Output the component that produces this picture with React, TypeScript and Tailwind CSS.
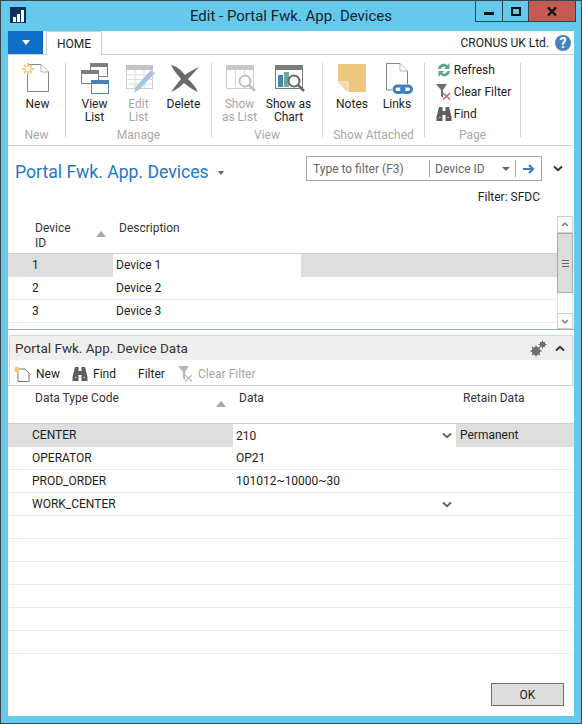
import React from "react";

const Chevron = ({ up = false, cls = "" }: { up?: boolean; cls?: string }) => (
  <svg width="10" height="7" viewBox="0 0 10 7" className={cls}>
    <path d={up ? "M1 5.5 L5 1.8 L9 5.5" : "M1 1.5 L5 5.2 L9 1.5"} fill="none" stroke="currentColor" strokeWidth="2" />
  </svg>
);
const SortUp = () => (
  <svg width="10" height="6" viewBox="0 0 10 6"><path d="M5 0 L10 6 L0 6 Z" fill="#a9a9a9" /></svg>
);

const IconNew = () => (
  <svg width="32" height="32" viewBox="0 0 32 32">
    <path d="M5.5 1.5 H19 L26.5 9 V28.5 H5.5 Z" fill="#fff" stroke="#858585" />
    <path d="M19 1.5 V9 H26.5" fill="#fff" stroke="#b5b5b5" />
    <g stroke="#f1c878" strokeWidth="2">
      <path d="M6 0 V12 M0 6 H12 M2 2 L10 10 M10 2 L2 10" />
    </g>
    <circle cx="6" cy="6" r="2.5" fill="#fff" />
  </svg>
);
const IconViewList = () => (
  <svg width="32" height="32" viewBox="0 1 32 32">
    <rect x="11.5" y="1.5" width="17" height="13" fill="#fff" stroke="#7f7f7f" />
    <rect x="11" y="1" width="18" height="4" fill="#7f7f7f" />
    <rect x="2.5" y="8.5" width="17" height="13" fill="#fff" stroke="#7f7f7f" />
    <rect x="2" y="8" width="18" height="4" fill="#7f7f7f" />
    <rect x="12.5" y="18.5" width="17" height="13" fill="#fff" stroke="#4b80b8" />
    <rect x="12" y="18" width="18" height="4" fill="#4b80b8" />
  </svg>
);
const IconEditList = () => (
  <svg width="32" height="32" viewBox="0 0 32 32">
    <rect x="3.5" y="2.5" width="26" height="23" fill="#fff" stroke="#cfcfcf" />
    <rect x="3" y="2" width="27" height="5" fill="#c4c4c4" />
    <path d="M3 12 H30 M3 16.5 H30 M3 21 H30 M12 7 V26 M21 7 V26" stroke="#dcdcdc" />
    <path d="M28 7 L32 10 L16 27 L11 29.5 L12.5 24 Z" fill="#a9c5e3" />
  </svg>
);
const IconDelete = () => (
  <svg width="32" height="32" viewBox="0 0 32 32">
    <path d="M3 2 C9 3 14 8 17 12 C21 9 26 6 31 4 C27 8 23 13 20 16 C24 20 28 24 30 29 C25 27 20 23 16 20 C12 24 8 27 3 29 C5 26 9 21 13 16 C9 11 5 7 3 2 Z" fill="#6a6a6a" />
  </svg>
);
const IconShowList = () => (
  <svg width="32" height="32" viewBox="-1 0 32 32">
    <rect x="1.5" y="2.5" width="27" height="23" fill="#fff" stroke="#cdcdcd" />
    <rect x="1" y="2" width="28" height="5" fill="#c8c8c8" />
    <path d="M10.5 7 V26 M19.5 7 V26" stroke="#d5d5d5" />
    <circle cx="20" cy="18" r="5.5" fill="#fff" stroke="#c0c0c0" strokeWidth="2" />
    <path d="M24 22 L30 28" stroke="#c0c0c0" strokeWidth="2.5" />
  </svg>
);
const IconChart = () => (
  <svg width="32" height="32" viewBox="-1 0 32 32">
    <rect x="1.5" y="2.5" width="27" height="23" fill="#fff" stroke="#7c7c7c" />
    <rect x="1" y="2" width="28" height="5" fill="#7c7c7c" />
    <rect x="4" y="12" width="5" height="12" fill="#4b80b8" />
    <rect x="10" y="9" width="5" height="15" fill="#6fa99a" />
    <circle cx="20" cy="18" r="5.5" fill="#fff" stroke="#6a6a6a" strokeWidth="2" />
    <path d="M24 22 L30 28" stroke="#6a6a6a" strokeWidth="2.5" />
  </svg>
);
const IconNotes = () => (
  <svg width="32" height="32" viewBox="0 0 32 32">
    <path d="M2 1 H30 V29 H12 L2 19 Z" fill="#eec77f" />
    <path d="M12 29 V19 H2" fill="none" stroke="#fff" strokeWidth="1" />
    <path d="M2.5 19.5 H11.5 V28.5 Z" fill="#f4d8a6" />
  </svg>
);
const IconLinks = () => (
  <svg width="32" height="32" viewBox="0 1 32 32">
    <path d="M5.5 1.5 H19 L26.5 9 V28 H5.5 Z" fill="#fff" stroke="#858585" />
    <path d="M19 1.5 V9 H26.5" fill="#fff" stroke="#b5b5b5" />
    <rect x="11" y="22" width="21" height="10" rx="4.5" fill="#fff" />
    <g fill="none" stroke="#3f80bd" strokeWidth="3">
      <rect x="13" y="24" width="10" height="6.5" rx="3.2" />
      <rect x="20.5" y="24" width="10" height="6.5" rx="3.2" />
    </g>
  </svg>
);
const IconRefresh = () => (
  <svg width="16" height="16" viewBox="0 0 16 16">
    <path d="M2 7 C2.5 3 6 1 9.5 2 L11.5 3.2 L13.5 1 V7 H8 L10 5 C8 3.8 5.5 4.5 4.8 7 Z" fill="#5fa589" />
    <path d="M14 9 C13.5 13 10 15 6.5 14 L4.5 12.8 L2.5 15 V9 H8 L6 11 C8 12.2 10.5 11.5 11.2 9 Z" fill="#5fa589" />
  </svg>
);
const IconClear = ({ c = "#6f6f6f", x = "#d9584b" }: { c?: string; x?: string }) => (
  <svg width="16" height="16" viewBox="0 0 16 16">
    <path d="M0 0 H11 L7 6 V14 L5 12 V6 Z" fill={c} />
    <path d="M7 9 L14 15.5 M14 9 L7 15.5" stroke={x} strokeWidth="1.4" />
  </svg>
);
const IconFind = () => (
  <svg width="16" height="16" viewBox="0 0 16 16">
    <path d="M3 1 H6.5 V5 H9.5 V1 H13 L15.5 11 V15 H9.5 V9 H6.5 V15 H0.5 V11 Z" fill="#5d5d5d" />
    <path d="M3 11.5 H4.5 M11.5 11.5 H13" stroke="#cfcfcf" />
  </svg>
);
const IconGears = () => (
  <svg width="17" height="17" viewBox="0 0 17 17" fill="none" stroke="#6f6f6f">
    <circle cx="6" cy="11" r="3" strokeWidth="2.4" />
    <path d="M6 5.5 V16.5 M0.5 11 H11.5 M2 7 L10 15 M10 7 L2 15" strokeWidth="1.3" />
    <circle cx="12.5" cy="4.5" r="2" strokeWidth="1.6" />
    <path d="M12.5 0.5 V8.5 M8.5 4.5 H16.5 M9.8 1.8 L15.2 7.2 M15.2 1.8 L9.8 7.2" strokeWidth="1" />
  </svg>
);

const BigBtn = ({ icon, lines, w, off = false }: { icon: React.ReactNode; lines: string[]; w: string; off?: boolean }) => (
  <div className={`flex flex-col items-center shrink-0 ${w} ${off ? "text-[#a6a6a6]" : "text-[#1d1d1d]"}`}>
    <div className="h-[32px] w-[32px] shrink-0">{icon}</div>
    <div className="mt-[3px] text-center leading-[13px] whitespace-nowrap">
      {lines.map((l) => (
        <div key={l}>{l}</div>
      ))}
    </div>
  </div>
);

const Group = ({ label, w, inner = "", children }: { label: string; w: string; inner?: string; children: React.ReactNode }) => (
  <div className={`${w} shrink-0 flex flex-col h-[74px] border-r border-[#d4d4d4]`}>
    <div className={`flex-1 flex justify-center ${inner}`}>{children}</div>
    <div className="text-center text-[#a9a9a9] leading-[14px] mb-[-5px]">{label}</div>
  </div>
);

const SmallBtn = ({ icon, text }: { icon: React.ReactNode; text: string }) => (
  <div className="flex items-center gap-[2px] h-[22px] text-[#1d1d1d] whitespace-nowrap">
    <div className="w-[16px] h-[16px]">{icon}</div>
    <span>{text}</span>
  </div>
);

const Row1 = ({ id, hi = false }: { id: string; hi?: boolean }) => (
  <div className={`grid grid-cols-[105px_188px_1fr] h-[23px] text-[#1d1d1d] leading-[22px] ${hi ? "" : "border-b border-[#ededed]"}`}>
    <div className={`pl-[24px] ${hi ? "bg-[#dedede]" : ""}`}>{id}</div>
    <div className="pl-[3px]">Device {id}</div>
    <div className={hi ? "bg-[#dedede]" : ""} />
  </div>
);

const Row2 = ({ a = "", b = "", c = "", hi = false, chev = false }: { a?: string; b?: string; c?: string; hi?: boolean; chev?: boolean }) => (
  <div className={`grid grid-cols-[225px_223px_1fr] h-[23px] text-[#1d1d1d] leading-[22px] ${hi ? "" : "border-b border-[#ededed]"}`}>
    <div className={`pl-[24px] ${hi ? "bg-[#dedede]" : ""}`}>{a}</div>
    <div className="pl-[3px] flex justify-between items-center pr-[4px]">
      <span>{b}</span>
      {chev && <Chevron cls="text-[#666666]" />}
    </div>
    <div className={`pl-[4px] ${hi ? "bg-[#dedede]" : ""}`}>{c}</div>
  </div>
);

export default function App() {
  return (
    <div
      className="w-[582px] h-[724px] border border-[#37474f] bg-[#65c9eb] flex flex-col text-[12px] overflow-hidden"
      style={{ fontFamily: "Roboto, 'Open Sans', sans-serif" }}
    >
      {/* Title bar */}
      <div className="h-[30px] shrink-0 flex items-start">
        <div className="w-[16px] h-[16px] ml-[9px] mt-[6px] bg-[#10305c] flex items-end justify-center gap-[1px] pb-[1px] shrink-0">
          <div className="w-[3px] h-[5px] bg-white" />
          <div className="w-[3px] h-[8px] bg-white" />
          <div className="w-[3px] h-[12px] bg-white" />
        </div>
        <div className="flex-1 text-center text-[15px] text-[#14262f] leading-[30px] pl-[81px] whitespace-nowrap">Edit - Portal Fwk. App. Devices</div>
        <div className="flex h-[21px] border border-[#2b4050] border-t-0 mr-[5px] shrink-0 w-[101px]">
          <div className="w-[27px] border-r border-[#2b4050] flex items-center justify-center"><div className="w-[10px] h-[3px] bg-[#111] mt-[4px]" /></div>
          <div className="w-[26px] border-r border-[#2b4050] flex items-center justify-center"><div className="w-[10px] h-[9px] border-2 border-[#111]" /></div>
          <div className="flex-1 bg-[#c55a50] flex items-center justify-center">
            <svg width="10" height="9" viewBox="0 0 10 9"><path d="M1 0.5 L9 8.5 M9 0.5 L1 8.5" stroke="#111" strokeWidth="2.4" /></svg>
          </div>
        </div>
      </div>

      {/* Content */}
      <div className="flex-1 mx-[7px] mb-[7px] bg-white flex flex-col min-h-0">
        {/* Tabs */}
        <div className="h-[24px] shrink-0 flex items-end border-b border-[#cfcfcf]">
          <div className="w-[35px] h-[23px] bg-[#0f6fc6] flex items-center justify-center">
            <svg width="8" height="5" viewBox="0 0 8 5"><path d="M0 0 H8 L4 5 Z" fill="#fff" /></svg>
          </div>
          <div className="ml-[3px] w-[56px] h-[24px] -mb-px bg-white border border-b-0 border-[#cfcfcf] flex items-center justify-center text-[#1d1d1d]">HOME</div>
          <div className="flex-1 flex justify-end items-center h-[23px] pr-[3px] gap-[6px] text-[#1d1d1d]">
            <span>CRONUS UK Ltd.</span>
            <div className="w-[16px] h-[16px] rounded-full bg-[#4a82bd] text-white font-bold text-[14px] leading-[16px] text-center">?</div>
          </div>
        </div>

        {/* Ribbon */}
        <div className="h-[91px] shrink-0 border-b border-[#d0d0d0] flex items-start pt-[8px]">
          <Group label="New" w="w-[58px]" inner="pl-[2px]"><BigBtn icon={<IconNew />} lines={["New"]} w="w-[44px]" /></Group>
          <Group label="Manage" w="w-[146px]" inner="pl-[2px]">
            <BigBtn icon={<IconViewList />} lines={["View", "List"]} w="w-[44px]" />
            <BigBtn icon={<IconEditList />} lines={["Edit", "List"]} w="w-[44px]" off />
            <BigBtn icon={<IconDelete />} lines={["Delete"]} w="w-[46px]" />
          </Group>
          <Group label="View" w="w-[111px]" inner="pr-[5px]">
            <BigBtn icon={<IconShowList />} lines={["Show", "as List"]} w="w-[48px]" off />
            <BigBtn icon={<IconChart />} lines={["Show as", "Chart"]} w="w-[50px]" />
          </Group>
          <Group label="Show Attached" w="w-[102px]" inner="pl-[1px]">
            <BigBtn icon={<IconNotes />} lines={["Notes"]} w="w-[46px]" />
            <BigBtn icon={<IconLinks />} lines={["Links"]} w="w-[44px]" />
          </Group>
          <Group label="Page" w="w-[96px]" inner="pl-[2px]">
            <div className="flex flex-col -mt-[4px]">
              <SmallBtn icon={<IconRefresh />} text="Refresh" />
              <SmallBtn icon={<IconClear />} text="Clear Filter" />
              <SmallBtn icon={<IconFind />} text="Find" />
            </div>
          </Group>
        </div>

        {/* Page header */}
        <div className="h-[71px] shrink-0 flex flex-col">
          <div className="flex items-start pt-[10px]">
            <div className="flex items-center ml-[7px] mt-[3px] text-[#2477c4] text-[17.6px] leading-[26px] whitespace-nowrap">
              Portal Fwk. App. Devices
              <svg width="6" height="4" viewBox="0 0 6 4" className="ml-[9px] mt-[1px]"><path d="M0 0 H6 L3 4 Z" fill="#666" /></svg>
            </div>
            <div className="ml-auto w-[236px] h-[25px] border border-[#a6a6a6] flex items-center text-[#666666]">
              <div className="w-[122px] pl-[6px]">Type to filter (F3)</div>
              <div className="h-[17px] w-[87px] border-l border-r border-[#a6a6a6] flex items-center justify-between pl-[5px] pr-[5px]">
                <span>Device ID</span>
                <svg width="8" height="4" viewBox="0 0 8 4"><path d="M0 0 H8 L4 4 Z" fill="#666" /></svg>
              </div>
              <div className="flex-1 flex justify-center">
                <svg width="12" height="10" viewBox="0 0 12 10"><path d="M0 5 H9 M6 1 L10 5 L6 9" fill="none" stroke="#3f7cb8" strokeWidth="2.2" /></svg>
              </div>
            </div>
            <div className="w-[32px] flex justify-center pt-[9px] text-[#333333]"><Chevron /></div>
          </div>
          <div className="text-right pr-[34px] mt-[4px] leading-[16px] text-[#1d1d1d]">Filter: SFDC</div>
        </div>

        {/* Upper table */}
        <div className="h-[113px] shrink-0 flex border-b border-[#a9a9a9]">
          <div className="w-[549px] shrink-0 flex flex-col">
            <div className="h-[37px] shrink-0 border-b border-[#cfcfcf] grid grid-cols-[105px_1fr] text-[#333333] leading-[15px] pt-[4px]">
              <div className="pl-[27px] pr-[7px] flex justify-between items-start">
                <span>Device<br />ID</span>
                <span className="mt-[10px] flex"><SortUp /></span>
              </div>
              <div className="pl-[6px]">Description</div>
            </div>
            <Row1 id="1" hi />
            <Row1 id="2" />
            <Row1 id="3" />
          </div>
          <div className="w-[16px] shrink-0 flex flex-col h-[113px] -mt-px text-[#666666]">
            <div className="h-[17px] border border-[#cfcfcf] flex items-center justify-center"><Chevron up cls="text-[#777777] scale-75" /></div>
            <div className="h-[60px] border border-[#a9a9a9] bg-[#dcdcdc] flex flex-col items-center justify-center gap-[2px]">
              <div className="w-[7px] h-px bg-[#666]" /><div className="w-[7px] h-px bg-[#666]" /><div className="w-[7px] h-px bg-[#666]" />
            </div>
            <div className="h-[20px] border-x border-[#e4e4e4]" />
            <div className="h-[16px] border border-[#cfcfcf] flex items-center justify-center"><Chevron cls="text-[#777777] scale-75" /></div>
          </div>
        </div>

        {/* Sub-panel */}
        <div className="mt-[5px] mx-px h-[50px] shrink-0 border border-b-0 border-[#c7dbf6] flex flex-col">
          <div className="h-[24px] shrink-0 bg-[#efefef] flex items-center pl-[5px] pr-[7px] text-[#333333] text-[13.5px]">
            <span>Portal Fwk. App. Device Data</span>
            <div className="ml-auto flex items-center gap-[8px]">
              <IconGears />
              <Chevron up cls="text-[#333333]" />
            </div>
          </div>
          <div className="flex-1 flex items-center text-[#1d1d1d] pl-[4px] pt-[2px]">
            <svg width="16" height="16" viewBox="0 0 32 32" className="mr-[6px]"><path d="M8 6 H22 L30 14 V31 H8 Z" fill="#fff" stroke="#777" strokeWidth="2" /><path d="M6 1 V13 M0 7 H12 M2 3 L10 11 M10 3 L2 11" stroke="#f1c878" strokeWidth="3" /></svg>
            <span className="w-[36px]">New</span>
            <div className="mr-[5px]"><IconFind /></div>
            <span className="w-[45px]">Find</span>
            <span className="w-[40px]">Filter</span>
            <div className="mr-[4px]"><IconClear c="#b5b5b5" x="#bdbdbd" /></div>
            <span className="text-[#a6a6a6]">Clear Filter</span>
          </div>
        </div>

        {/* Lower table */}
        <div className="border-t border-[#cfcfcf] shrink-0">
          <div className="h-[38px] border-b border-[#cfcfcf] grid grid-cols-[225px_224px_1fr] text-[#333333] pt-[5px] leading-[15px]">
            <div className="pl-[27px] pr-[7px] flex justify-between items-start">
              <span>Data Type Code</span>
              <span className="mt-[10px] flex"><SortUp /></span>
            </div>
            <div className="pl-[6px]">Data</div>
            <div className="pl-[6px]">Retain Data</div>
          </div>
          <Row2 a="CENTER" b="210" c="Permanent" hi chev />
          <Row2 a="OPERATOR" b="OP21" />
          <Row2 a="PROD_ORDER" b="101012~10000~30" />
          <Row2 a="WORK_CENTER" chev />
          <Row2 />
          <Row2 />
          <Row2 />
          <Row2 />
          <Row2 />
          <Row2 />
        </div>

        {/* Footer */}
        <div className="flex-1 flex justify-end items-end pr-[10px] pb-[10px]">
          <button className="w-[73px] h-[23px] bg-[#dddddd] border border-[#707070] text-[#1d1d1d] text-[12px]">OK</button>
        </div>
      </div>
    </div>
  );
}
